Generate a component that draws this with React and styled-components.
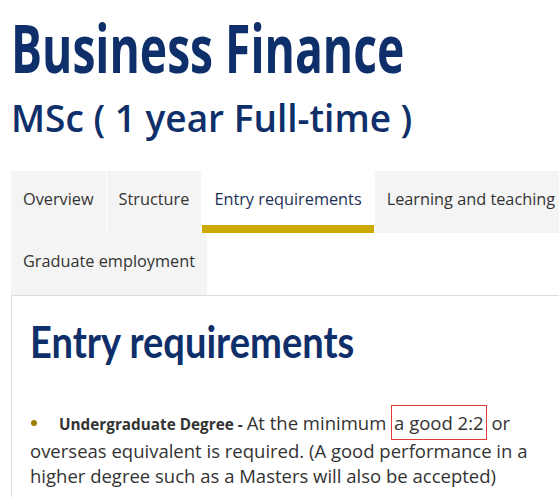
import React from "react";
import styled, { createGlobalStyle } from "styled-components";

const GlobalStyle = createGlobalStyle`
  html, body {
    margin: 0;
    padding: 0;
    background: #fff;
    overflow: hidden;
  }
  body {
    font-family: "Open Sans", "Noto Sans", sans-serif;
    color: #333;
  }
`;

const navy = "#0f2f6b";

const Page = styled.div`
  width: 570px;
  padding: 0 0 0 11px;
`;

const Title = styled.h1`
  margin: 0;
  padding-top: 11px;
  font-family: "Open Sans", sans-serif;
  font-weight: 700;
  font-size: 66px;
  line-height: 72px;
  color: ${navy};
`;

/* headline faces are narrower than what is installed, squeeze them a bit */
const Squeezed = styled.span`
  display: inline-block;
  transform: scaleX(${(p) => p.$x});
  transform-origin: left center;
  white-space: nowrap;
`;

const Subtitle = styled.h2`
  margin: 13px 0 0;
  font-family: "Open Sans", sans-serif;
  font-weight: 600;
  font-size: 37px;
  line-height: 44px;
  color: ${navy};
`;

const Tabs = styled.ul`
  display: flex;
  flex-wrap: wrap;
  list-style: none;
  margin: 31px 0 0;
  padding: 0;
`;

const Tab = styled.li`
  margin-right: 1px;
  padding: 17px 12px ${(p) => (p.$active ? "15px" : "23px")};
  background: ${(p) => (p.$active ? "#fff" : "#f4f4f4")};
  border-bottom: ${(p) => (p.$active ? "8px solid #cca800" : "none")};
  font-size: 16.3px;
  line-height: 22px;
  color: ${(p) => (p.$active ? "#1c2f57" : "#333")};
  white-space: nowrap;
`;

const Panel = styled.section`
  border-top: 1px solid #ddd;
  border-left: 1px solid #ddd;
  padding: 18px 18px 30px;
`;

const PanelHeading = styled.h2`
  margin: 0;
  font-family: "Lato", sans-serif;
  font-weight: 700;
  font-size: 43px;
  line-height: 56px;
  color: ${navy};
`;

const List = styled.ul`
  list-style: none;
  margin: 40px 0 0;
  padding: 0;
`;

const Item = styled.li`
  font-size: 18.5px;
  line-height: 25.5px;
  color: #333;

  &::before {
    content: "";
    display: inline-block;
    width: 6px;
    height: 6px;
    border-radius: 50%;
    background: #a07c00;
    margin: 0 22px 4px 1px;
    vertical-align: middle;
  }
`;

const Label = styled.strong`
  font-size: 15.3px;
  font-weight: 700;
  color: #333;
`;

const Marked = styled.span`
  border: 1px solid #e23b3b;
  padding: 4px 2px;
`;

const tabs = [
  { label: "Overview" },
  { label: "Structure" },
  { label: "Entry requirements", active: true },
  { label: "Learning and teaching" },
  { label: "Graduate employment" },
];

export default function App() {
  return (
    <>
      <GlobalStyle />
      <Page>
        <Title>
          <Squeezed $x={0.7}>Business Finance</Squeezed>
        </Title>
        <Subtitle>MSc ( 1 year Full-time )</Subtitle>
        <Tabs>
          {tabs.map((t) => (
            <Tab key={t.label} $active={t.active}>
              {t.label}
            </Tab>
          ))}
        </Tabs>
        <Panel>
          <PanelHeading>
            <Squeezed $x={0.885}>Entry requirements</Squeezed>
          </PanelHeading>
          <List>
            <Item>
              <Label>Undergraduate Degree - </Label>At the minimum{" "}
              <Marked>a good 2:2</Marked> or overseas equivalent is required.
              (A good performance in a higher degree such as a Masters will
              also be accepted)
            </Item>
          </List>
        </Panel>
      </Page>
    </>
  );
}
